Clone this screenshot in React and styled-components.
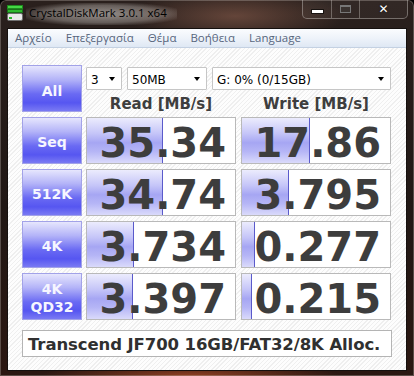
import React from 'react';
import styled, { createGlobalStyle } from 'styled-components';

const GlobalStyle = createGlobalStyle`
    html, body {
        margin: 0;
        padding: 0;
        background: #000;
    }
    body {
        width: 414px;
        height: 376px;
        overflow: hidden;
    }
`;

const Window = styled.div`
    width: 414px;
    height: 376px;
    box-sizing: border-box;
    display: flex;
    flex-direction: column;
    padding: 0 7px 5px 7px;
    border-radius: 6px 6px 0 0;
    background:
        radial-gradient(ellipse 110px 26px at 235px 16px, rgba(125, 85, 70, 0.7), rgba(125, 85, 70, 0) 100%),
        radial-gradient(ellipse 150px 14px at 190px 376px, rgba(150, 65, 35, 0.95), rgba(150, 65, 35, 0) 100%),
        linear-gradient(180deg, #2a201d 0%, #211815 55%, #2b1711 100%);
    box-shadow: inset 0 0 0 1px rgba(190, 180, 175, 0.35);
`;

const TitleBar = styled.div`
    height: 28px;
    display: flex;
    align-items: flex-start;
    flex-shrink: 0;
`;

const AppIcon = styled.svg`
    margin-top: 5px;
    flex-shrink: 0;
`;

const Title = styled.div`
    margin: 3px 0 0 3px;
    padding: 2px 10px 4px 3px;
    font-family: 'Open Sans', 'Noto Sans', sans-serif;
    font-size: 11.5px;
    line-height: 16px;
    color: #000;
    background: radial-gradient(ellipse at center, rgba(215, 210, 205, 0.62) 0%, rgba(215, 210, 205, 0.35) 55%, rgba(215, 210, 205, 0) 80%);
`;

const Controls = styled.div`
    margin-left: auto;
    margin-right: -1px;
    display: flex;
    height: 19px;
    box-sizing: border-box;
    border: 1px solid rgba(200, 195, 190, 0.45);
    border-top: none;
    border-radius: 0 0 5px 5px;
    background: rgba(255, 255, 255, 0.04);
    overflow: hidden;
`;

const ControlButton = styled.div`
    width: ${(p) => p.$w}px;
    display: flex;
    align-items: center;
    justify-content: center;
    border-left: ${(p) => (p.$first ? 'none' : '1px solid rgba(200, 195, 190, 0.4)')};
`;

const MinGlyph = styled.div`
    width: 11px;
    height: 3px;
    margin-top: 4px;
    background: #fff;
    box-shadow: 0 0 0 1px rgba(0, 0, 0, 0.6);
`;

const MaxGlyph = styled.div`
    width: 9px;
    height: 5px;
    border: 1px solid #777;
    border-top-width: 2px;
    background: #3a3330;
`;

const CloseGlyph = styled.div`
    font-family: 'DejaVu Sans', sans-serif;
    font-weight: bold;
    font-size: 12px;
    line-height: 12px;
    color: #fff;
    text-shadow: 0 0 2px rgba(0, 0, 0, 0.8);
`;

const Client = styled.div`
    flex: 1;
    display: flex;
    flex-direction: column;
    border: 1px solid #15100e;
    background: #fff;
`;

const MenuBar = styled.div`
    height: 19px;
    box-sizing: border-box;
    display: flex;
    align-items: center;
    background: linear-gradient(180deg, #fbfcfe 0%, #eef3fa 50%, #dfe8f4 100%);
    border-bottom: 1px solid #c4d1e2;
`;

const MenuItem = styled.div`
    padding: 0 7px;
    font-family: 'Open Sans', 'Noto Sans', sans-serif;
    font-size: 11.5px;
    line-height: 16px;
    color: #57667d;
`;

const Body = styled.div`
    flex: 1;
    padding: 17px 0 0 14px;
    background: repeating-linear-gradient(135deg, #fdfdfd 0px, #fdfdfd 2px, #efefef 2px, #efefef 3px);
`;

const Grid = styled.div`
    display: grid;
    grid-template-columns: 60px 150px 151px;
    grid-template-rows: repeat(5, 47px);
    column-gap: 4px;
    row-gap: 5px;
`;

const LabelButton = styled.div`
    grid-column: 1;
    box-sizing: border-box;
    border: 1px solid #a2a2e8;
    background: linear-gradient(180deg, #e6e6fd 0%, #b4b4f8 30%, #6a6af3 62%, #5656f1 82%, #7a7af3 100%);
    display: flex;
    flex-direction: column;
    align-items: center;
    justify-content: center;
    padding-top: ${(p) => (p.$big ? 5 : 3)}px;
    font-family: 'DejaVu Sans', Verdana, sans-serif;
    font-weight: bold;
    font-size: 14px;
    line-height: 18px;
    color: #f6f6ff;
    text-align: center;
`;

const ComboRow = styled.div`
    grid-column: 2 / span 2;
    grid-row: 1;
    align-self: start;
    margin-top: 2px;
    display: flex;
    gap: 5px;
`;

const Combo = styled.div`
    width: ${(p) => (p.$w ? `${p.$w}px` : 'auto')};
    flex: ${(p) => (p.$w ? 'none' : '1')};
    height: 23px;
    box-sizing: border-box;
    border: 1px solid #c6c6c6;
    border-radius: 1px;
    background: #fff;
    display: flex;
    align-items: center;
    padding: 2px 6px 0 4px;
    font-family: 'DejaVu Sans', Verdana, sans-serif;
    font-size: 12px;
    color: #000;
`;

const ComboText = styled.span`
    flex: 1;
    white-space: nowrap;
`;

const Arrow = styled.span`
    width: 0;
    height: 0;
    border-left: 3.5px solid transparent;
    border-right: 3.5px solid transparent;
    border-top: 4px solid #000;
    margin-bottom: 2px;
`;

const Header = styled.div`
    grid-column: ${(p) => p.$col};
    grid-row: 1;
    align-self: end;
    justify-self: ${(p) => (p.$col === 3 ? 'end' : 'start')};
    width: 150px;
    text-align: center;
    font-family: 'DejaVu Sans', Verdana, sans-serif;
    font-weight: bold;
    font-size: 15px;
    line-height: 15px;
    color: #3e3e3e;
`;

const Result = styled.div`
    grid-column: ${(p) => p.$col};
    justify-self: ${(p) => (p.$col === 3 ? 'end' : 'start')};
    width: 150px;
    position: relative;
    box-sizing: border-box;
    border: 1px solid #b9b9b9;
    background: #fff;
    display: flex;
    align-items: center;
    justify-content: flex-end;
    padding: 5px 9px 0 0;
`;

const Fill = styled.div`
    position: absolute;
    top: 0;
    bottom: 0;
    left: 0;
    box-sizing: border-box;
    border-right: 1px solid #5a5acb;
    background: linear-gradient(180deg, #ececfd 0%, #c4c4f8 35%, #a6a6f3 55%, #b6b6f6 75%, #dadafb 100%);
`;

const Value = styled.span`
    position: relative;
    font-family: 'DejaVu Sans', Verdana, sans-serif;
    font-weight: bold;
    font-size: 40px;
    line-height: 36px;
    color: #3d3d3d;
`;

const Comment = styled.div`
    margin-top: 10px;
    width: 370px;
    height: 27px;
    box-sizing: border-box;
    border: 1px solid #b4b4b4;
    background: #fff;
    display: flex;
    align-items: center;
    padding: 1px 0 0 5px;
    font-family: 'DejaVu Sans', Verdana, sans-serif;
    font-weight: bold;
    font-size: 16.5px;
    letter-spacing: -0.1px;
    color: #303030;
    white-space: nowrap;
`;

const menus = ['Αρχείο', 'Επεξεργασία', 'Θέμα', 'Βοήθεια', 'Language'];

const rows = [
    { label: ['Seq'], read: '35.34', write: '17.86' },
    { label: ['512K'], read: '34.74', write: '3.795' },
    { label: ['4K'], read: '3.734', write: '0.277' },
    { label: ['4K', 'QD32'], read: '3.397', write: '0.215' },
];

// bar length follows a log scale, ~30px per decade
const barWidth = (v) => Math.max(0, Math.round(30 * (Math.log10(parseFloat(v)) + 1)));

const ResultCell = ({ col, row, value }) => (
    <Result $col={col} style={{ gridRow: row }}>
        <Fill style={{ width: barWidth(value) }} />
        <Value>{value}</Value>
    </Result>
);

export default function App() {
    return (
        <>
            <GlobalStyle />
            <Window>
                <TitleBar>
                    <AppIcon width="16" height="16" viewBox="0 0 16 16">
                        <rect x="0.5" y="0.5" width="15" height="3" fill="#45d845" stroke="#1f8a1f" />
                        <rect x="0.5" y="4.5" width="15" height="3" fill="#2cb82c" stroke="#1a6f1a" />
                        <rect x="0.5" y="8.5" width="15" height="7" rx="1.5" fill="#e9e9e9" stroke="#6f6f6f" />
                        <rect x="2" y="12" width="3" height="2" fill="#2cb82c" />
                    </AppIcon>
                    <Title>CrystalDiskMark 3.0.1 x64</Title>
                    <Controls>
                        <ControlButton $w={28} $first>
                            <MinGlyph />
                        </ControlButton>
                        <ControlButton $w={27}>
                            <MaxGlyph />
                        </ControlButton>
                        <ControlButton $w={47}>
                            <CloseGlyph>✕</CloseGlyph>
                        </ControlButton>
                    </Controls>
                </TitleBar>
                <Client>
                    <MenuBar>
                        {menus.map((m) => (
                            <MenuItem key={m}>{m}</MenuItem>
                        ))}
                    </MenuBar>
                    <Body>
                        <Grid>
                            <LabelButton $big style={{ gridRow: 1 }}>All</LabelButton>
                            <ComboRow>
                                <Combo $w={36}>
                                    <ComboText>3</ComboText>
                                    <Arrow />
                                </Combo>
                                <Combo $w={80}>
                                    <ComboText>50MB</ComboText>
                                    <Arrow />
                                </Combo>
                                <Combo>
                                    <ComboText>G: 0% (0/15GB)</ComboText>
                                    <Arrow />
                                </Combo>
                            </ComboRow>
                            <Header $col={2}>Read [MB/s]</Header>
                            <Header $col={3}>Write [MB/s]</Header>
                            {rows.map((r, i) => (
                                <React.Fragment key={r.read}>
                                    <LabelButton style={{ gridRow: i + 2 }}>
                                        {r.label.map((l) => (
                                            <span key={l}>{l}</span>
                                        ))}
                                    </LabelButton>
                                    <ResultCell col={2} row={i + 2} value={r.read} />
                                    <ResultCell col={3} row={i + 2} value={r.write} />
                                </React.Fragment>
                            ))}
                        </Grid>
                        <Comment>Transcend JF700 16GB/FAT32/8K Alloc.</Comment>
                    </Body>
                </Client>
            </Window>
        </>
    );
}
